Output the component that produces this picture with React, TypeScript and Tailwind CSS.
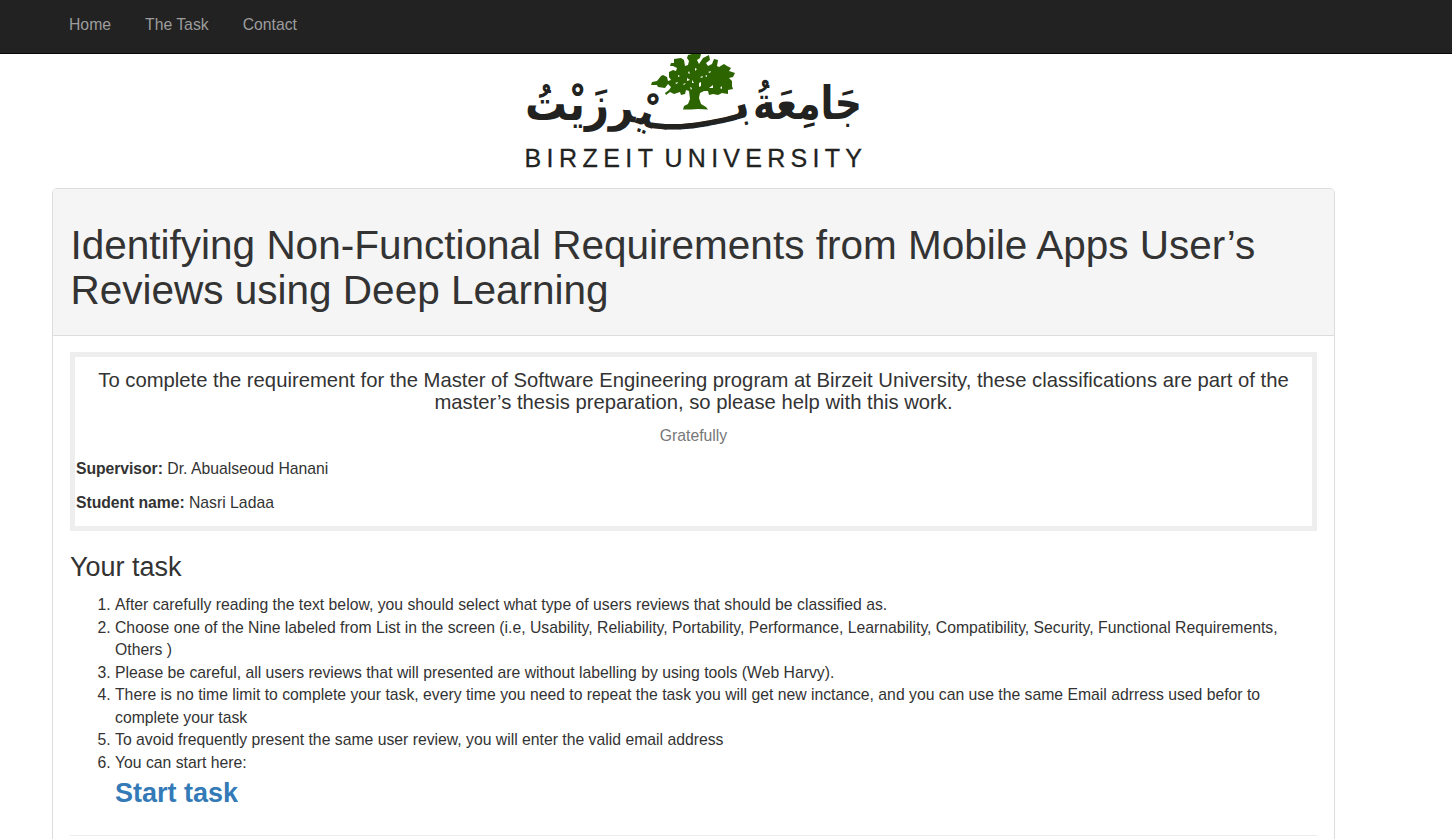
import React from "react";

const steps: string[] = [
  "After carefully reading the text below, you should select what type of users reviews that should be classified as.",
  "Choose one of the Nine labeled from List in the screen (i.e, Usability, Reliability, Portability, Performance, Learnability, Compatibility, Security, Functional Requirements, Others )",
  "Please be careful, all users reviews that will presented are without labelling by using tools (Web Harvy).",
  "There is no time limit to complete your task, every time you need to repeat the task you will get new inctance, and you can use the same Email adrress used befor to complete your task",
  "To avoid frequently present the same user review, you will enter the valid email address",
];

function Navbar() {
  return (
    <nav className="flex h-[54px] shrink-0 gap-[34px] border-b border-[#080808] bg-[#222] pl-[69px] pt-[14px] leading-[22.5px] text-[#9d9d9d]">
      <a href="#">Home</a>
      <a href="#">The Task</a>
      <a href="#">Contact</a>
    </nav>
  );
}

function Tree() {
  return (
    <g>
      <path
        fill="#2c6400"
        d="M683 109.5L684 106L688 104L690 99L689 91L686 90L685 94L681 95L680 92L677 93L674 94L670 92L666 95L665 93L669 90L671 87L668 84L665 88L658 87L657 85L651 85L652 82L657 81L661 76L663 75L667 77L668 81L671 80L669 77L669 72L673 70L676 71L677 68L673 66L670 66L671 63L674 63L674 59L681 58L684 60L685 66L688 65L689 61L687 58L688 55L692 54L701 54L700 58L697 60L699 64L703 58L709 55L710 60L706 63L708 66L712 64L714 59L718 60L717 66L719 67L724 64L727 66L731 68L729 71L735 73L733 77L729 78L732 81L732 86L733 89L728 90L728 94L722 93L718 95L713 94L709 95L708 91L704 91L700 93L699 98L701 104L706 107L708 109.5L698 109L691 109.5Z"
      />
      <g fill="#fff">
        <path d="M689 71l1 3-2-1zM695 68l2 1-2 2zM687 78l3 2-3 1zM692 80l2 3-2 0zM700 77l3-1-1 2zM699 83l2-1v4l-2 1zM683 84l3-1-2 2zM678 75l2 1-2 1zM708 72l3-1-1 2z" />
        <path d="M705 76l2-1v2zM690 87l2 1-1 2zM675 83l3-1-1 2zM709 88l4-3 0 3zM720 88l2-2 0 3z" />
      </g>
    </g>
  );
}

function Logo() {
  return (
    <svg className="ml-[520px] block h-[134px] w-[350px] shrink-0" viewBox="520 54 350 134">
      <Tree />
      <defs>
        <path id="swoop" d="M609 122Q628 120 644 126Q682 137 756 114" />
      </defs>
      <g fill="#222221" fontWeight="700" style={{ fontFamily: '"DejaVu Sans", sans-serif' }}>
        <text x="753" y="119" fontSize="46" textLength="109" lengthAdjust="spacingAndGlyphs">
          جَامِعَةُ
        </text>
        <text fontSize="44">
          <textPath href="#swoop" textLength="145" lengthAdjust="spacingAndGlyphs">
            بــــــيْر
          </textPath>
        </text>
        <text x="525" y="120" fontSize="48" textLength="84" lengthAdjust="spacingAndGlyphs">
          زَيْتُ
        </text>
      </g>
      <g
        fontSize="25"
        fill="#222221"
        stroke="#222221"
        strokeWidth="0.3"
        style={{ fontFamily: '"Liberation Sans", Arial, sans-serif' }}
      >
        <text x="524.5" y="167" textLength="128.5">
          BIRZEIT
        </text>
        <text x="664.5" y="167" textLength="197.5">
          UNIVERSITY
        </text>
      </g>
    </svg>
  );
}

function Acknowledgement() {
  return (
    <section className="h-[179px] border-[5px] border-[#eee] px-px pt-[12px]">
      <h4 className="text-center text-[20.25px] leading-[22.3px]">
        To complete the requirement for the Master of Software Engineering program at Birzeit University, these
        classifications are part of the master’s thesis preparation, so please help with this work.
      </h4>
      <p className="mt-[11.4px] text-center text-[#777]">Gratefully</p>
      <p className="mt-[11px]">
        <b className="tracking-[-0.06px]">Supervisor:</b> Dr. Abualseoud Hanani
      </p>
      <p className="mt-[11px]">
        <b className="tracking-[-0.06px]">Student name:</b> Nasri Ladaa
      </p>
    </section>
  );
}

export default function App() {
  return (
    <div
      className="flex h-[839px] flex-col overflow-hidden bg-white text-[15.75px] leading-[22.5px] text-[#333]"
      style={{ fontFamily: '"Liberation Sans", Arial, sans-serif' }}
    >
      <Navbar />
      <Logo />
      <main className="ml-[52px] h-[700px] w-[1283px] shrink-0 rounded-t-[5px] border border-[#ddd]">
        <header className="h-[147px] rounded-t-[4px] border-b border-[#ddd] bg-[#f5f5f5] pl-[17.5px] pr-[17px] pt-[34px]">
          <h1 className="text-[40.5px] leading-[45px]">
            Identifying Non-Functional Requirements from Mobile Apps User’s Reviews using Deep Learning
          </h1>
        </header>
        <div className="px-[17px] pt-[16px]">
          <Acknowledgement />
          <h3 className="mt-[21px] text-[27px] leading-[30px]">Your task</h3>
          <ol className="mt-[12px] list-decimal pl-[45px]">
            {steps.map((step) => (
              <li key={step}>{step}</li>
            ))}
            <li>
              You can start here:
              <a href="#" className="block text-[27px] font-bold leading-[38.5px] text-[#337ab7]">
                Start task
              </a>
            </li>
          </ol>
          <hr className="mt-[22.5px] border-[#eee]" />
        </div>
      </main>
    </div>
  );
}
